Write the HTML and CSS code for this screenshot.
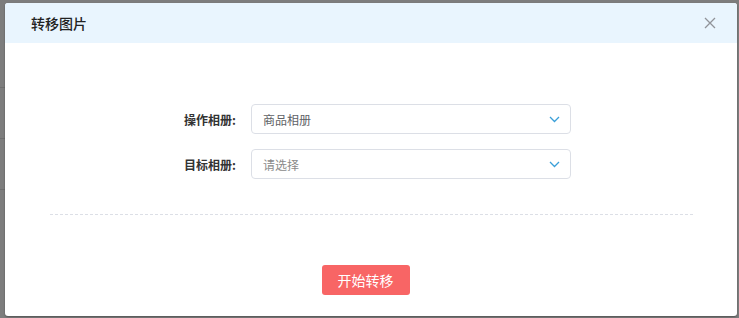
FILE: index.html
```html
<!DOCTYPE html>
<html lang="zh-CN">
<head>
<meta charset="utf-8">
<title>转移图片</title>
<link rel="stylesheet" href="styles.css">
</head>
<body>
<div class="backdrop">
  <div class="bg-page">
    <div class="bg-row"></div>
    <div class="bg-row"></div>
    <div class="bg-row"></div>
  </div>
  <div class="modal">
    <div class="modal-header">
      <span class="modal-title">转移图片</span>
      <span class="modal-close" aria-label="关闭">
        <svg width="12" height="12" viewBox="0 0 12 12"><path d="M1 1 L11 11 M11 1 L1 11" stroke="#909399" stroke-width="1.3" fill="none"/></svg>
      </span>
    </div>
    <div class="modal-body">
      <div class="form">
        <div class="form-row">
          <label class="form-label">操作相册:</label>
          <div class="select">
            <span class="select-value">商品相册</span>
            <svg class="chev" width="11" height="7" viewBox="0 0 11 7"><path d="M1 1 L5.5 5.5 L10 1" stroke="#3a9fd8" stroke-width="1.3" fill="none"/></svg>
          </div>
        </div>
        <div class="form-row">
          <label class="form-label">目标相册:</label>
          <div class="select">
            <span class="select-placeholder">请选择</span>
            <svg class="chev" width="11" height="7" viewBox="0 0 11 7"><path d="M1 1 L5.5 5.5 L10 1" stroke="#3a9fd8" stroke-width="1.3" fill="none"/></svg>
          </div>
        </div>
      </div>
      <div class="divider"></div>
      <div class="actions">
        <button class="btn-danger">开始转移</button>
      </div>
    </div>
  </div>
</div>
</body>
</html>
```
FILE: styles.css
```css
html, body {
  margin: 0;
  padding: 0;
}
body {
  width: 739px;
  height: 318px;
  overflow: hidden;
  background: #7d7d7d;
  font-family: "Noto Sans CJK SC", "Noto Sans", sans-serif;
}
.backdrop {
  position: relative;
  width: 739px;
  height: 318px;
}
.bg-page {
  position: absolute;
  left: 0;
  top: 0;
  width: 40px;
  padding-top: 37px;
}
.bg-row {
  height: 50px;
  border-bottom: 1px solid #6f6f6f;
}
.modal {
  position: absolute;
  left: 5px;
  top: 3px;
  width: 732px;
  height: 313px;
  background: #fff;
  border-radius: 3px;
  overflow: hidden;
  box-shadow: 0 1px 2px rgba(0,0,0,0.35);
}
.modal-header {
  height: 40px;
  background: #e9f5fe;
  display: flex;
  align-items: center;
  justify-content: space-between;
  padding: 0 21px 0 26px;
}
.modal-title {
  font-size: 14px;
  font-weight: 500;
  color: #222;
}
.modal-close {
  display: flex;
  width: 12px;
  height: 12px;
}
.modal-body {
  padding: 61px 44px 0 45px;
}
.form {
  display: flex;
  flex-direction: column;
  gap: 15px;
}
.form-row {
  display: flex;
  align-items: center;
}
.form-label {
  width: 201px;
  text-align: right;
  padding-right: 15px;
  box-sizing: border-box;
  font-size: 12px;
  font-weight: 700;
  color: #333;
}
.select {
  width: 320px;
  height: 30px;
  box-sizing: border-box;
  border: 1px solid #dcdfe6;
  border-radius: 4px;
  display: flex;
  align-items: center;
  justify-content: space-between;
  padding: 0 10px 0 11px;
  font-size: 12px;
}
.select-value {
  color: #606266;
}
.select-placeholder {
  color: #8a8a8a;
}
.chev {
  display: block;
}
.divider {
  margin-top: 35px;
  border-top: 1px dashed #dcdfe6;
}
.actions {
  display: flex;
  justify-content: center;
  padding-top: 50px;
  padding-right: 12px;
}
.btn-danger {
  width: 88px;
  height: 30px;
  border: none;
  border-radius: 3px;
  background: #f86565;
  color: #fff;
  font-family: "Noto Sans CJK SC", sans-serif;
  font-size: 14px;
  padding: 0;
}
```
